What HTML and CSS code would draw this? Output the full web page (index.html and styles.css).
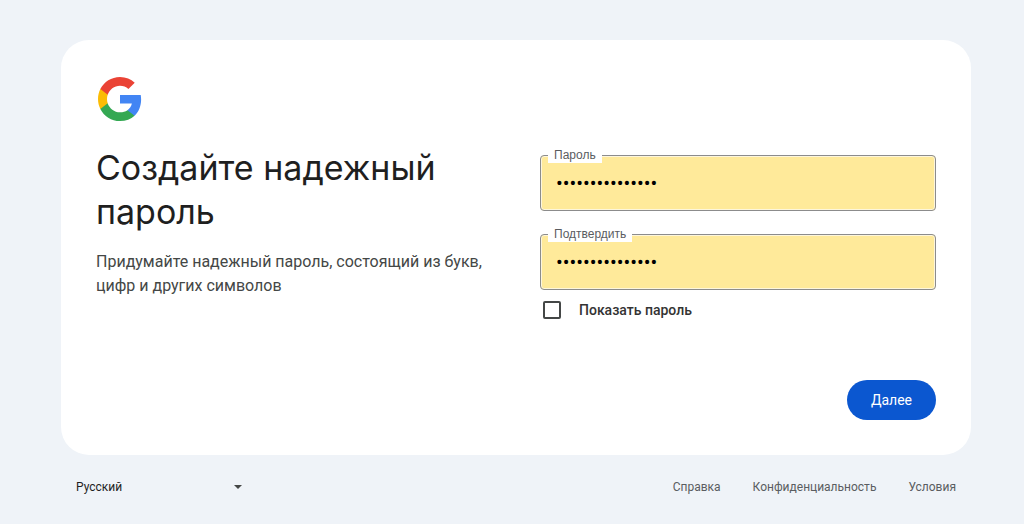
FILE: index.html
```html
<!DOCTYPE html>
<html lang="ru">
<head>
<meta charset="utf-8">
<meta name="viewport" content="width=device-width, initial-scale=1">
<title>Создайте надежный пароль</title>
<link rel="stylesheet" href="styles.css">
</head>
<body>
<div class="page">
  <main class="card">
    <svg class="logo" viewBox="0 0 48 48" role="img" aria-label="Google">
      <path fill="#4285F4" d="M45.12 24.5c0-1.56-.14-3.06-.4-4.5H24v8.51h11.84c-.51 2.75-2.06 5.08-4.39 6.64v5.52h7.11c4.16-3.83 6.56-9.47 6.56-16.17z"/>
      <path fill="#34A853" d="M24 46c5.94 0 10.92-1.97 14.56-5.33l-7.11-5.52c-1.97 1.32-4.49 2.1-7.45 2.1-5.73 0-10.58-3.87-12.31-9.07H4.34v5.7C7.96 41.07 15.4 46 24 46z"/>
      <path fill="#FBBC05" d="M11.69 28.18C11.25 26.86 11 25.45 11 24s.25-2.86.69-4.18v-5.7H4.34C2.85 17.09 2 20.45 2 24s.85 6.91 2.34 9.88l7.35-5.7z"/>
      <path fill="#EA4335" d="M24 10.75c3.23 0 6.13 1.11 8.41 3.29l6.31-6.31C34.91 4.18 29.93 2 24 2 15.4 2 7.96 6.93 4.34 14.12l7.35 5.7c1.73-5.2 6.58-9.07 12.31-9.07z"/>
    </svg>
    <form class="form">
      <div class="columns">
        <header class="intro">
          <h1 class="title">Создайте надежный пароль</h1>
          <p class="subtitle">Придумайте надежный пароль, состоящий из букв, цифр и других символов</p>
        </header>
        <div class="fields">
          <div class="field">
            <input class="field-input" id="password" type="password" value="123456789012345">
            <label class="field-label" for="password">Пароль</label>
          </div>
          <div class="field">
            <input class="field-input" id="confirm" type="password" value="123456789012345">
            <label class="field-label" for="confirm">Подтвердить</label>
          </div>
          <div class="show">
            <input class="show-box" id="show" type="checkbox">
            <label class="show-label" for="show">Показать пароль</label>
          </div>
        </div>
      </div>
      <div class="actions">
        <button class="next" type="button">Далее</button>
      </div>
    </form>
  </main>
  <footer class="footer">
    <div class="language">
      <select class="language-select" aria-label="Язык">
        <option>Русский</option>
      </select>
      <svg class="language-arrow" viewBox="0 0 8 4" aria-hidden="true"><path d="M0 0h8L4 4z"/></svg>
    </div>
    <nav class="links">
      <a class="link" href="#">Справка</a>
      <a class="link" href="#">Конфиденциальность</a>
      <a class="link" href="#">Условия</a>
    </nav>
  </footer>
</div>
</body>
</html>
```
FILE: styles.css
```css
* {
  box-sizing: border-box;
}

body {
  margin: 0;
  background: #eff3f8;
  color: #1f1f1f;
  font-family: Roboto, "Liberation Sans", sans-serif;
}

.page {
  max-width: 1024px;
  margin: 0 auto;
  padding: 40px 53px 0 61px;
}

.card {
  padding: 35px;
  border-radius: 28px;
  background: #fff;
}

.logo {
  display: block;
  width: 48px;
  height: 48px;
}

.columns {
  display: grid;
  grid-template-columns: 1fr 1fr;
  gap: 48px;
}

.intro {
  padding-top: 23px;
}

.title {
  margin: 0;
  font-family: Inter, sans-serif;
  font-size: 34px;
  font-weight: 400;
  line-height: 44px;
}

.subtitle {
  margin: 16px 0 0;
  font-size: 16px;
  font-weight: 400;
  line-height: 24px;
  color: #444746;
}

.fields {
  display: flex;
  flex-direction: column;
  gap: 23px;
  padding-top: 32px;
}

.field {
  position: relative;
}

.field-input {
  display: block;
  width: 100%;
  height: 56px;
  padding: 0 15px;
  border: 1px solid #8c8c8c;
  border-radius: 4px;
  background: #ffea9a;
  box-shadow: inset 0 0 0 1px #fdf6dc;
  color: #000;
  font: 20px Roboto, sans-serif;
}

.field-label {
  position: absolute;
  top: -8px;
  left: 8px;
  padding: 0 6px;
  background: #fff;
  color: #5a5c5f;
  font-family: "Liberation Sans", sans-serif;
  font-size: 12px;
  line-height: 16px;
}

.show {
  display: flex;
  align-items: center;
  gap: 18px;
  margin-top: -12px;
  padding-left: 3px;
}

.show-box {
  appearance: none;
  width: 18px;
  height: 18px;
  margin: 0;
  border: 2px solid #444746;
  border-radius: 2px;
}

.show-label {
  color: #333;
  font-size: 14px;
  font-weight: 500;
  line-height: 18px;
}

.actions {
  display: flex;
  justify-content: flex-end;
  padding-top: 61px;
}

.next {
  height: 40px;
  padding: 0 24px;
  border: 0;
  border-radius: 20px;
  background: #0b57d0;
  color: #fff;
  font: 400 14px/20px Roboto, sans-serif;
}

.footer {
  display: flex;
  justify-content: space-between;
  align-items: center;
  padding: 16px 15px 0;
}

.language {
  display: flex;
  position: relative;
  align-items: center;
}

.language-select {
  appearance: none;
  width: 166px;
  height: 32px;
  padding: 0;
  border: 0;
  background: transparent;
  color: #1f1f1f;
  font: 12px Roboto, sans-serif;
}

.language-arrow {
  position: absolute;
  right: 0;
  width: 8px;
  height: 4px;
  fill: #444746;
  pointer-events: none;
}

.links {
  display: flex;
  gap: 32px;
}

.link {
  color: #5a5d61;
  font-size: 12px;
  line-height: 16px;
  text-decoration: none;
}
```
